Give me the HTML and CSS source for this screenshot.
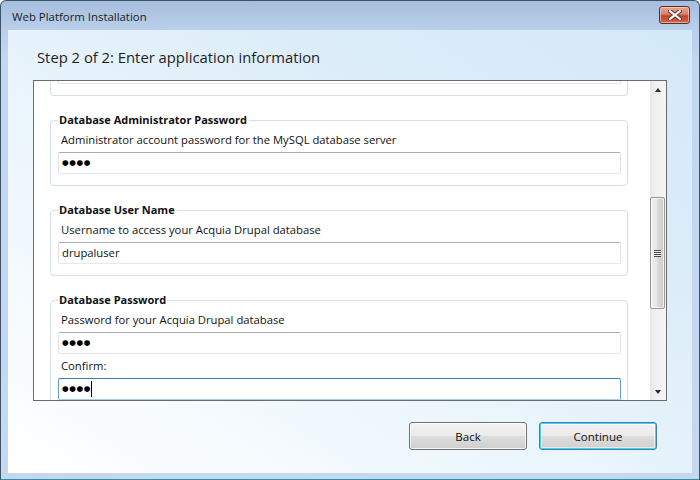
FILE: index.html
```html
<!DOCTYPE html>
<html>
<head>
<meta charset="utf-8">
<link rel="stylesheet" href="styles.css">
</head>
<body>
<div class="window">
  <div class="titlebar">
    <span class="title">Web Platform Installation</span>
    <button class="close" aria-label="Close">
      <svg width="14" height="10" viewBox="0 0 14 10"><path d="M2 1 L12 9 M12 1 L2 9" stroke="#6b2a22" stroke-width="4" stroke-linecap="square"/><path d="M2 1 L12 9 M12 1 L2 9" stroke="#ffffff" stroke-width="2.2" stroke-linecap="square"/></svg>
    </button>
  </div>
  <div class="client">
    <h1 class="heading">Step 2 of 2: Enter application information</h1>
    <div class="panel">
      <div class="scroll">
        <div class="group-tail"><div class="field-tail"></div></div>
        <fieldset class="group">
          <legend>Database Administrator Password</legend>
          <div class="desc">Administrator account password for the MySQL database server</div>
          <div class="field"><span class="dots">●●●●</span></div>
        </fieldset>
        <fieldset class="group">
          <legend>Database User Name</legend>
          <div class="desc">Username to access your Acquia Drupal database</div>
          <div class="field">drupaluser</div>
        </fieldset>
        <fieldset class="group">
          <legend>Database Password</legend>
          <div class="desc">Password for your Acquia Drupal database</div>
          <div class="field"><span class="dots">●●●●</span></div>
          <div class="desc">Confirm:</div>
          <div class="field focused"><span class="dots">●●●●</span><span class="caret"></span></div>
        </fieldset>
      </div>
      <div class="scrollbar">
        <div class="arrow up"></div>
        <div class="track">
          <div class="thumb"><span class="grip"></span></div>
        </div>
        <div class="arrow down"></div>
      </div>
    </div>
    <div class="buttons">
      <button class="btn">Back</button>
      <button class="btn default">Continue</button>
    </div>
  </div>
</div>
</body>
</html>
```

FILE: styles.css
```css
html, body {
  margin: 0;
  padding: 0;
  width: 700px;
  height: 480px;
  overflow: hidden;
  background: #ffffff;
}

.window {
  box-sizing: border-box;
  width: 700px;
  height: 480px;
  border: 1px solid #3e5268;
  border-bottom-color: #2f8fa3;
  border-radius: 6px 6px 0 0;
  background: linear-gradient(to bottom, #a5bedc 0px, #b9cfeb 28px, #c2d7f0 60px, #c4d8f0 100%);
  display: flex;
  flex-direction: column;
  font-family: "Open Sans", "Noto Sans", sans-serif;
}

.titlebar {
  height: 29px;
  display: flex;
  align-items: center;
  justify-content: space-between;
  padding: 0 9px 0 11px;
}

.title {
  font-size: 11.4px;
  color: #1b1b1b;
  margin-top: 1px;
}

.close {
  width: 31px;
  height: 18px;
  margin-top: -1px;
  padding: 0;
  border: 1px solid #5d2a24;
  border-radius: 3px;
  background: linear-gradient(to bottom, #e8a593 0%, #d7826c 45%, #c0452b 55%, #d0654a 100%);
  box-shadow: inset 0 0 0 1px rgba(255, 220, 210, 0.6);
  display: flex;
  align-items: center;
  justify-content: center;
}

.client {
  flex: 1;
  margin: 0 7px 6px 7px;
  background: linear-gradient(to top right, #ffffff 0%, #eef7fd 35%, #dcedf9 70%, #d4e9f8 100%);
  display: flex;
  flex-direction: column;
}

.heading {
  margin: 0;
  padding: 17px 0 0 29px;
  height: 34px;
  box-sizing: border-box;
  font-weight: normal;
  font-size: 14.8px;
  line-height: 20px;
  color: #1e1e1e;
}

.panel {
  margin: 16px 0 0 25px;
  width: 634px;
  height: 321px;
  box-sizing: border-box;
  border: 1px solid #6b6b6b;
  background: #ffffff;
  display: flex;
}

.scroll {
  flex: 1;
  overflow: hidden;
  padding: 0 22px 0 16px;
  font-size: 11.25px;
  color: #111;
}

.group-tail {
  border: 1px solid #d5dfe8;
  border-top: 0;
  border-radius: 0 0 4px 4px;
  padding: 0 6px 11px 7px;
}

.field-tail {
  height: 2px;
  border: 1px solid #e1e6ee;
  border-top: 0;
}

.group {
  margin: 16px 0 0 0;
  padding: 0 6px 11px 7px;
  border: 1px solid #d5dfe8;
  border-radius: 4px;
  min-width: 0;
}

.group legend {
  font-weight: bold;
  font-size: 11px;
  line-height: 16px;
  padding: 0 2px 0 1px;
  margin-left: 0;
  color: #111;
}

.desc {
  line-height: 16px;
  padding: 4px 0 4px 3px;
}

.field {
  box-sizing: border-box;
  height: 22px;
  border: 1px solid #e2e3ea;
  border-top-color: #abadb3;
  border-bottom-color: #e3e9ef;
  border-radius: 2px;
  padding: 0 3px;
  display: flex;
  align-items: center;
  line-height: 20px;
}

.field.focused {
  border-color: #a9cbe6;
  border-top-color: #3d7bad;
  border-left-color: #5f9cd0;
  border-right-color: #5f9cd0;
}

.dots {
  font-family: "DejaVu Sans", sans-serif;
  font-size: 7.6px;
  letter-spacing: 0.6px;
  color: #000;
}

.caret {
  display: inline-block;
  width: 1px;
  height: 16px;
  background: #000;
}

.scrollbar {
  width: 16px;
  display: flex;
  flex-direction: column;
  background: linear-gradient(to right, #e8e8ea 0%, #f1f0f2 40%, #f6f4f7 100%);
}

.arrow {
  height: 17px;
  display: flex;
  align-items: center;
  justify-content: center;
}

.arrow::before {
  content: "";
  width: 0;
  height: 0;
  border-left: 3.5px solid transparent;
  border-right: 3.5px solid transparent;
}

.arrow.up::before {
  border-bottom: 4px solid #2b2b2b;
}

.arrow.down::before {
  border-top: 4px solid #2b2b2b;
}

.track {
  flex: 1;
  padding-top: 99px;
}

.thumb {
  box-sizing: border-box;
  width: 15px;
  height: 112px;
  border: 1px solid #979797;
  border-radius: 2px;
  background: linear-gradient(to right, #f2f2f2 0%, #e6e6e6 45%, #d6d6d6 55%, #cfcfcf 100%);
  box-shadow: inset 0 0 0 1px rgba(255, 255, 255, 0.7);
  display: flex;
  align-items: center;
  justify-content: center;
}

.grip {
  width: 7px;
  height: 7px;
  background: repeating-linear-gradient(to bottom, #4b4b4b 0 1px, #e9e9e9 1px 2px);
}

.buttons {
  display: flex;
  justify-content: flex-end;
  gap: 12px;
  padding: 21px 35px 0 0;
}

.btn {
  width: 118px;
  height: 28px;
  box-sizing: border-box;
  border: 1px solid #707070;
  border-radius: 3px;
  background: linear-gradient(to bottom, #f2f2f2 0%, #ebebeb 48%, #dddddd 52%, #cfcfcf 100%);
  box-shadow: inset 0 0 0 1px rgba(255, 255, 255, 0.8);
  font-family: "Open Sans", "Noto Sans", sans-serif;
  font-size: 11.5px;
  color: #111;
  padding: 0;
}

.btn.default {
  border-color: #3c7fb1;
  box-shadow: inset 0 0 0 1px #48d0f6, inset 0 0 0 2px rgba(255, 255, 255, 0.5);
}
```
